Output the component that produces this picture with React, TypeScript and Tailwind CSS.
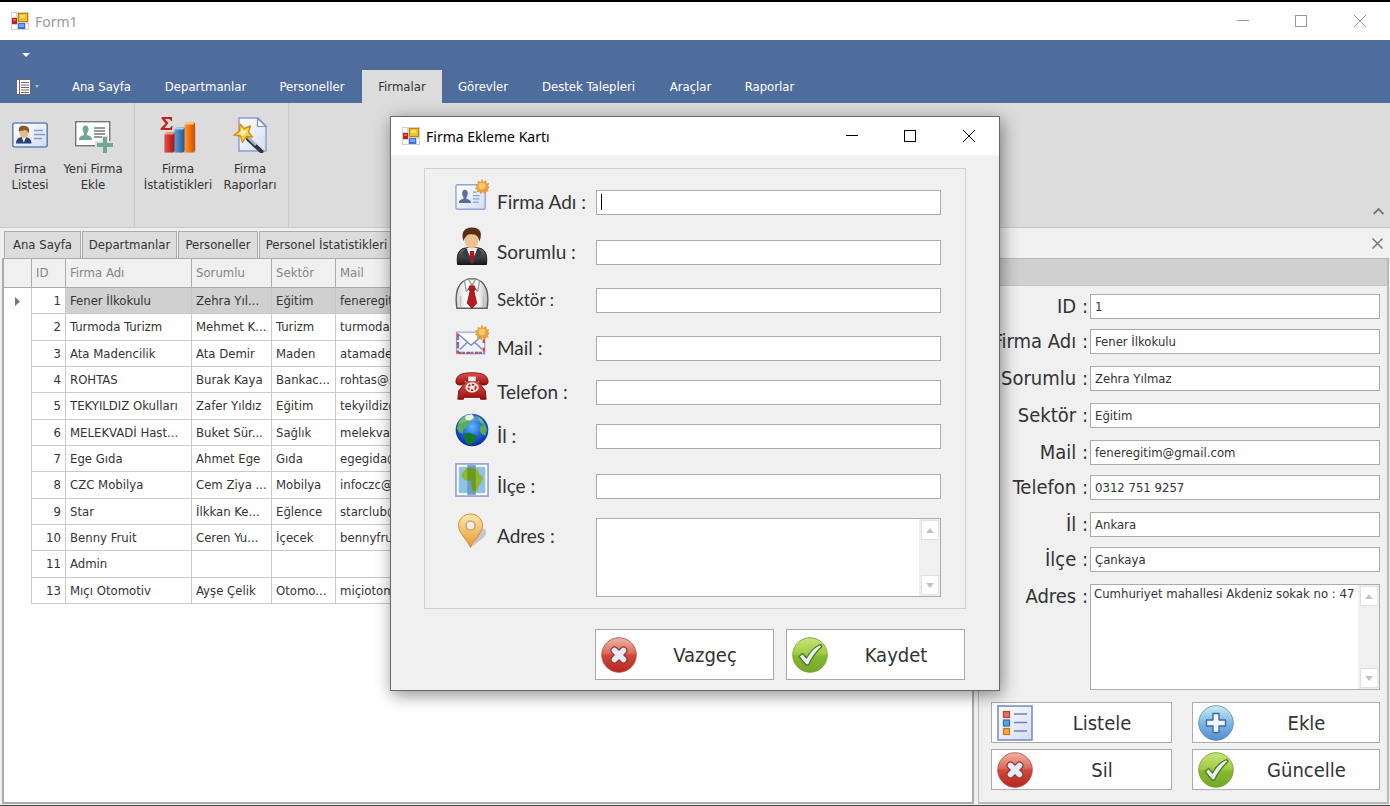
import type { ReactNode } from "react";

function Gradients() {
  return (
    <svg width="0" height="0" className="absolute" aria-hidden="true">
      <defs>
        <linearGradient id="red" x1="0" y1="0" x2="0" y2="1">
          <stop offset="0" stopColor="#f0b5a6" />
          <stop offset="0.45" stopColor="#d8695a" />
          <stop offset="0.5" stopColor="#cd4a3c" />
          <stop offset="1" stopColor="#b8271f" />
        </linearGradient>
        <linearGradient id="green" x1="0" y1="0" x2="0" y2="1">
          <stop offset="0" stopColor="#c9e47a" />
          <stop offset="0.45" stopColor="#a3cc48" />
          <stop offset="0.55" stopColor="#84b82c" />
          <stop offset="1" stopColor="#76a62a" />
        </linearGradient>
        <linearGradient id="blue" x1="0" y1="0" x2="0" y2="1">
          <stop offset="0" stopColor="#c9ecf5" />
          <stop offset="0.5" stopColor="#7fb7e2" />
          <stop offset="1" stopColor="#4f8fcf" />
        </linearGradient>
        <linearGradient id="gold" x1="0" y1="0" x2="0" y2="1">
          <stop offset="0" stopColor="#fce9b0" />
          <stop offset="1" stopColor="#e8962c" />
        </linearGradient>
        <linearGradient id="paper" x1="0" y1="0" x2="1" y2="1">
          <stop offset="0" stopColor="#ffffff" />
          <stop offset="1" stopColor="#d3ddf2" />
        </linearGradient>
        <linearGradient id="suit" x1="0" y1="0" x2="0" y2="1">
          <stop offset="0" stopColor="#6d7580" />
          <stop offset="1" stopColor="#17191d" />
        </linearGradient>
        <linearGradient id="phone" x1="0" y1="0" x2="0" y2="1">
          <stop offset="0" stopColor="#e0504a" />
          <stop offset="1" stopColor="#97100f" />
        </linearGradient>
        <radialGradient id="ocean" cx="0.5" cy="0.4" r="0.6">
          <stop offset="0" stopColor="#5db8f8" />
          <stop offset="0.6" stopColor="#1c5bdd" />
          <stop offset="1" stopColor="#0a2a9a" />
        </radialGradient>
        <linearGradient id="barRed" x1="0" y1="0" x2="1" y2="0">
          <stop offset="0" stopColor="#e2524a" />
          <stop offset="1" stopColor="#a8100f" />
        </linearGradient>
        <linearGradient id="barBlue" x1="0" y1="0" x2="1" y2="0">
          <stop offset="0" stopColor="#5d9fd6" />
          <stop offset="1" stopColor="#1d5592" />
        </linearGradient>
        <linearGradient id="barOrange" x1="0" y1="0" x2="1" y2="0">
          <stop offset="0" stopColor="#ff9a3a" />
          <stop offset="0.4" stopColor="#f9770f" />
          <stop offset="1" stopColor="#cf5006" />
        </linearGradient>
        <linearGradient id="shirt" x1="0" y1="0" x2="1" y2="0">
          <stop offset="0" stopColor="#d4d4d4" />
          <stop offset="0.35" stopColor="#ffffff" />
          <stop offset="0.7" stopColor="#f6f6f6" />
          <stop offset="1" stopColor="#b9b9b9" />
        </linearGradient>
      </defs>
    </svg>
  );
}

function Icon({ size = 36, children }: { size?: number; children: ReactNode }) {
  return (
    <svg width={size} height={size} viewBox="0 0 36 36" className="shrink-0" aria-hidden="true">
      {children}
    </svg>
  );
}

function Burst() {
  return (
    <g transform="translate(7.5 0.5) scale(0.78)">
      <path
        d="M27 0l2 4 3.500-2.500 0 4.500 4-0.500-2 3.500 3 2-3.500 1.500 1.500 3.500-4-0.500-0.500 3.500-3-2.500-2.500 3-1.500-3.500-3.500 1 1-3.500-3.500-1 2.500-2.500-2-3 3.500-0.500-0.500-4 4 1.500z"
        fill="#eda23a"
        stroke="#d98a28"
        strokeWidth="0.800"
      />
      <circle cx="27" cy="9" r="4.500" fill="#f9c870" />
    </g>
  );
}

function AppIcon() {
  return (
    <svg width="18" height="18" viewBox="0 0 18 18" className="shrink-0" aria-hidden="true">
      <rect width="18" height="18" fill="#d2d2d2" />
      <rect x="1" y="1" width="4" height="4" fill="#fff" />
      <rect x="1" y="13" width="5" height="4" fill="#fff" />
      <rect x="15" y="12" width="2" height="5" fill="#fff" />
      <rect x="1" y="6" width="5" height="6" fill="#c01c18" />
      <rect x="2" y="7" width="3" height="2" fill="#dc6258" />
      <rect x="7" y="1" width="10" height="9" fill="#b98306" />
      <rect x="8" y="2" width="8" height="7" fill="#f3c01c" />
      <rect x="9" y="3" width="5" height="3" fill="#fbdc70" />
      <rect x="7" y="11" width="7" height="6" fill="#3a72d8" />
      <rect x="8" y="12" width="5" height="3" fill="#74a7f5" />
    </svg>
  );
}

function CardIcon() {
  return (
    <Icon>
      <rect x="0.800" y="6" width="34.400" height="24" rx="2" fill="url(#paper)" stroke="#6284b8" strokeWidth="1.600" />
      <path d="M4 26.500c0-5 3-6.500 7.500-6.500s8 1.500 8 6.500z" fill="#2a4172" />
      <path d="M9.500 19.500l2.300 6 2.700-6z" fill="#fff" />
      <ellipse cx="12" cy="15.500" rx="4.500" ry="5.500" fill="#e6b98b" />
      <path d="M7 15c-1.500-6 3-7 6-6 4 0 5 4 3.500 7.500-1-3-2-3.500-4-3.500-2.500 1.500-4.500 0-5.500 2z" fill="#8a5a2b" />
      <path d="M22 13.500h9M22 17.500h11M22 21.500h8" stroke="#7d9bc7" strokeWidth="1.400" />
    </Icon>
  );
}

function CardAddIcon() {
  return (
    <svg width="40" height="36" viewBox="0 0 40 36" aria-hidden="true">
      <rect x="2.700" y="4.700" width="34" height="24" fill="#fff" stroke="#777" strokeWidth="1.400" />
      <path d="M6 23c0-3 1.500-4 5-5v-2c-2-2.500-2-7.500 1.500-7.500s4 5 1.500 7.500v2c3.500 1 5 2 5 5z" fill="#6fa893" />
      <path d="M21 11h11M21 14h11M21 17h11M21 20h9" stroke="#777" strokeWidth="1.300" />
      <path d="M22 24h7v-5h6v5h5v8h-5v4h-6v-4h-7z" fill="#dcdcdc" />
      <path d="M32 20v16M24 28h16" stroke="#6fa893" strokeWidth="4" />
    </svg>
  );
}

function StatsIcon() {
  return (
    <Icon>
      <path d="M1.500 0h10.500v4h-1l-1.500-2H5l3.500 4L4.500 11h5.500l1.500-2h1l-0.500 4H0.500v-1.500l5-5-4-5z" fill="#c4201e" />
      <path d="M4 35.500h31.500l1-2V10h-4l-18 8-10 2z" fill="#888" opacity="0.350" />
      <path d="M4.500 17.500l2-2h8.500v18.500l-2 1.500H4.500z" fill="url(#barRed)" />
      <path d="M4.500 17.500l2-2h8.500l-2 2z" fill="#f49a8c" />
      <path d="M14.500 12.500l2-2h8.500v23.500l-2 1.500h-8.500z" fill="url(#barBlue)" />
      <path d="M14.500 12.500l2-2h8.500l-2 2z" fill="#a5cdee" />
      <path d="M24.500 7.500l2-2h8.500v28.500l-2 1.500h-8.500z" fill="url(#barOrange)" />
      <path d="M24.500 7.500l2-2h8.500l-2 2z" fill="#ffc68c" />
    </Icon>
  );
}

function WizardIcon() {
  return (
    <Icon>
      <path d="M7 1h19l8 8v25H7z" fill="url(#paper)" stroke="#8a9cc8" strokeWidth="1.400" />
      <path d="M25.500 1.500v8H34z" fill="#fff" stroke="#7f90bf" strokeWidth="1.200" />
      <path d="M16 22l13.500 12.500" stroke="#2f3644" strokeWidth="4" strokeLinecap="round" />
      <path d="M16 20.500l8 7.500" stroke="#aab4c4" strokeWidth="2.500" />
      <path d="M8 7l4 4.500 6.500-2.500-2 6 4 5-6.500-0.500-3.500 6-2-6.500-6.500-1 5.500-4z" fill="#fbd24a" stroke="#d88d12" strokeWidth="1.400" strokeLinejoin="round" />
      <path d="M9 11l2.500 3 3.500-1-1 3-4 3-3-2.500 2.500-2z" fill="#fff3a8" />
    </Icon>
  );
}

function ContactNewIcon() {
  return (
    <Icon size={34}>
      <rect x="1" y="6" width="31" height="26" rx="1.500" fill="url(#paper)" stroke="#92a5d4" strokeWidth="1.500" />
      <path d="M4 25.500c0-2.500 1.500-3.500 5-4.500v-1.500c-2-2.500-2-8 1.500-8s4 5.500 1.500 8V21c3.500 1 5 2 5 4.500z" fill="#5c6d99" />
      <path d="M19 14h4M19 17.500h7M19 21h7M19 24.500h6" stroke="#8ca0d0" strokeWidth="1.300" />
      <Burst />
    </Icon>
  );
}

function PersonIcon() {
  return (
    <svg width="32" height="38" viewBox="2 0 32 38" className="ml-px" aria-hidden="true">
      <path d="M3.500 37.500c-1-10 1-15.500 8-16.500l6.500-1 6.500 1c7 1 9 6.500 8 16.500z" fill="url(#suit)" stroke="#16181b" />
      <path d="M12 21l6-1 6 1-6 14z" fill="#eee" />
      <path d="M16 24h4l1 10-3 3-3-3z" fill="#b3131b" />
      <path d="M12 21l-4 5 10 11-5-15zM24 21l4 5-10 11 5-15z" fill="#353b43" />
      <ellipse cx="17.500" cy="13" rx="7" ry="8.500" fill="#edc290" />
      <path d="M9.500 14C6 3 13 0.500 18 0.500c8 0 11 5 7.500 14C24 9 22 7.500 19 7.500c-4-1-7 0-9.500 6.500z" fill="#553015" />
    </svg>
  );
}

function ShirtIcon() {
  return (
    <Icon size={34}>
      <path d="M2 33C0 20 2 10 8 5l6-3h8l6 3c6 5 8 15 6 28z" fill="url(#shirt)" stroke="#5e5e5e" strokeWidth="1.500" />
      <path d="M6 33V20M30 33V20" stroke="#b5b5b5" />
      <path d="M10 4l4-2 4 7-6 6zM26 4l-4-2-4 7 6 6z" fill="#fff" stroke="#8a8a8a" strokeWidth="1.200" />
      <path d="M15.500 9.500h5l1 3.500-1.500 2 3 13-5 5-5-5 3-13-1.500-2z" fill="#bb1920" stroke="#8f1318" />
    </Icon>
  );
}

function MailIcon() {
  return (
    <Icon size={34}>
      <rect x="1.500" y="7.500" width="30" height="23" fill="#edf2fc" stroke="#8796c4" strokeWidth="1" />
      <path d="M3 9v21M3 29.500h28M30.500 28V14" fill="none" stroke="#d4474b" strokeWidth="2.500" strokeDasharray="4 5" />
      <path d="M3 13v18M7.500 29.500H31" fill="none" stroke="#4a7fca" strokeWidth="2.500" strokeDasharray="3 6" />
      <path d="M5 10h24L17 21z" fill="#fff" />
      <path d="M4 10l13 11.500L30 10M5 26l8-7.500M29 26l-8-7.500" fill="none" stroke="#7f8db9" strokeWidth="1.600" />
      <Burst />
    </Icon>
  );
}

function PhoneIcon() {
  return (
    <Icon size={34}>
      <path d="M3 32l1-9 8-10h12l8 10 1 9h-6v-2H9v2z" fill="url(#phone)" stroke="#7d0d0d" />
      <path d="M1 14C1 7 6 4 18 4s17 3 17 10c0 2-2 3-5 3s-4-1-4-5H10c0 4-1 5-4 5s-5-1-5-3z" fill="url(#phone)" stroke="#7d0d0d" />
      <path d="M14 8h8v5h-8z" fill="#eee" />
      <ellipse cx="18" cy="19.500" rx="7" ry="5.500" fill="#f2e6e2" />
      <ellipse cx="18" cy="19.500" rx="4" ry="3" fill="none" stroke="#a22" strokeWidth="1.800" strokeDasharray="2.500 1.500" />
    </Icon>
  );
}

function GlobeIcon() {
  return (
    <Icon size={34}>
      <circle cx="18" cy="18" r="17.300" fill="url(#ocean)" />
      <path d="M4 9c4-6 9-8 14-7l3 3-4 5-3 1-2 5-3 1-1 5-4-2-2-4z" fill="#5cab5e" />
      <path d="M11 3l7-2 2 4-4 3-5-1z" fill="#e5f0ee" />
      <path d="M9 22l6-1 8 3-1 5-5 5-4-1-2-5z" fill="#127a22" />
      <path d="M23 3l6 4 3 6-4-1zM27 14l5-2 2 6-2 6-4-2-2-4z" fill="#56ad4f" />
      <path d="M4 12C7 4 13 1.500 18 2c6 0 11 4 13 9-7-4-18-4-27 1z" fill="#fff" opacity="0.180" />
    </Icon>
  );
}

function MapIcon() {
  return (
    <Icon size={34}>
      <rect x="1" y="1" width="34" height="34" fill="#fff" stroke="#7e95c9" strokeWidth="1.500" />
      <rect x="4" y="4" width="28" height="28" fill="#8cc3e5" />
      <path d="M13 2h9v32h-9z" fill="#6596ba" opacity="0.850" />
      <path d="M7 11l6-6 8 1 3 1 2 5 4 3-3 7-2 3-2 5h-4l-2-7v-4l-7-1-3-4z" fill="#8fb833" />
      <path d="M13 5l8 1 1 1v23h-3l-2-7v-4l-4-0.500z" fill="#6f9820" />
    </Icon>
  );
}

function PinIcon() {
  return (
    <Icon>
      <path d="M18 34l12-10c4-4 2-9-3-9z" fill="#777" opacity="0.350" />
      <path d="M16.500 34.500C14 28 4.500 20 4.500 12.500 4.500 6 10 1 16.500 1S28.500 6 28.500 12.500C28.500 20 19 28 16.500 34.500z" fill="url(#gold)" stroke="#d28e32" />
      <circle cx="16.500" cy="12.500" r="4.500" fill="#f0f0f0" stroke="#cfa868" strokeWidth="1.600" />
    </Icon>
  );
}

function CancelIcon() {
  return (
    <Icon>
      <circle cx="18" cy="18" r="17.300" fill="url(#red)" stroke="#b5453a" strokeWidth="0.800" />
      <path d="M13.500 13.500l9 9M22.500 13.500l-9 9" stroke="#93332c" strokeWidth="8" strokeLinecap="round" />
      <path d="M13.500 13.500l9 9M22.500 13.500l-9 9" stroke="#e6ebf7" strokeWidth="5.600" strokeLinecap="round" />
    </Icon>
  );
}

function OkIcon() {
  return (
    <Icon>
      <circle cx="18" cy="18" r="17.300" fill="url(#green)" stroke="#6d9c2c" strokeWidth="0.800" />
      <path d="M7 19.500l3.500-3 4 4.500C18 14.500 22 10 28.500 7.500l1.500 2C24.500 14.500 20 20 16.500 28H14z" fill="#e9eef8" stroke="#4f7a22" strokeWidth="1.300" strokeLinejoin="round" />
    </Icon>
  );
}

function AddIcon() {
  return (
    <Icon>
      <circle cx="18" cy="18" r="17.300" fill="url(#blue)" stroke="#4f84bd" strokeWidth="0.800" />
      <path d="M15 8.500h6V15h6.500v6H21v6.500h-6V21H8.500v-6H15z" fill="#f2f6fc" stroke="#3f6ba5" strokeWidth="1.400" strokeLinejoin="round" />
    </Icon>
  );
}

function ListIcon() {
  return (
    <Icon>
      <rect x="1" y="1" width="34" height="34" fill="url(#paper)" stroke="#7d8fc0" strokeWidth="1.600" />
      <rect x="6.500" y="6.500" width="6" height="6" fill="#e2705e" stroke="#b7452f" strokeWidth="1.200" />
      <rect x="6.500" y="15" width="6" height="6" fill="#5ba3dc" stroke="#2f6fae" strokeWidth="1.200" />
      <rect x="6.500" y="23.500" width="6" height="6" fill="#f0a83c" stroke="#bd7d1f" strokeWidth="1.200" />
      <path d="M17 9h13M17 17.500h13M17 26h13" stroke="#7282b0" strokeWidth="1.500" />
    </Icon>
  );
}

function WindowControls({ tone }: { tone: string }) {
  return (
    <div className={`flex ${tone}`}>
      <button type="button" aria-label="Simge durumuna küçült" className="grid h-9 w-[58px] place-items-center">
        <svg width="12" height="12" viewBox="0 0 12 12" stroke="currentColor"><path d="M0 5.500h12" /></svg>
      </button>
      <button type="button" aria-label="Ekranı kapla" className="grid h-9 w-[58px] place-items-center">
        <svg width="12" height="12" viewBox="0 0 12 12" fill="none" stroke="currentColor"><rect x="0.500" y="0.500" width="11" height="11" /></svg>
      </button>
      <button type="button" aria-label="Kapat" className="grid h-9 w-[60px] place-items-center">
        <svg width="12" height="12" viewBox="0 0 12 12" stroke="currentColor"><path d="M0 0l12 12M12 0L0 12" /></svg>
      </button>
    </div>
  );
}

function ScrollTrack() {
  return (
    <div className="flex w-[21px] shrink-0 flex-col items-center justify-between bg-[#f0f0f0] py-px">
      <button type="button" aria-label="Yukarı kaydır" className="grid h-5 w-[18px] place-items-center border border-[#e2e2e2] bg-white">
        <svg width="8" height="5" viewBox="0 0 8 5" fill="#c4c4c4"><path d="M4 0l4 5H0z" /></svg>
      </button>
      <button type="button" aria-label="Aşağı kaydır" className="grid h-5 w-[18px] place-items-center border border-[#e2e2e2] bg-white">
        <svg width="8" height="5" viewBox="0 0 8 5" fill="#c4c4c4"><path d="M4 5l4-5H0z" /></svg>
      </button>
    </div>
  );
}

const ribbonTabs = [
  { label: "Ana Sayfa", width: "w-[95px]" },
  { label: "Departmanlar", width: "w-[113px]" },
  { label: "Personeller", width: "w-[100px]" },
  { label: "Firmalar", width: "w-[80px]", active: true },
  { label: "Görevler", width: "w-[82px]" },
  { label: "Destek Talepleri", width: "w-[129px]" },
  { label: "Araçlar", width: "w-[75px]" },
  { label: "Raporlar", width: "w-[83px]" },
];

const documentTabs = [
  { label: "Ana Sayfa", width: "w-[77px]" },
  { label: "Departmanlar", width: "w-[95px]" },
  { label: "Personeller", width: "w-[80px]" },
  { label: "Personel İstatistikleri", width: "w-[135px]" },
];

const companies = [
  { id: 1, name: "Fener İlkokulu", contact: "Zehra Yıl...", sector: "Eğitim", mail: "feneregitim@..." },
  { id: 2, name: "Turmoda Turizm", contact: "Mehmet K...", sector: "Turizm", mail: "turmoda@..." },
  { id: 3, name: "Ata Madencilik", contact: "Ata Demir", sector: "Maden", mail: "atamaden@..." },
  { id: 4, name: "ROHTAS", contact: "Burak Kaya", sector: "Bankac...", mail: "rohtas@..." },
  { id: 5, name: "TEKYILDIZ Okulları", contact: "Zafer Yıldız", sector: "Eğitim", mail: "tekyildiz@..." },
  { id: 6, name: "MELEKVADİ Hast...", contact: "Buket Sür...", sector: "Sağlık", mail: "melekvadi@..." },
  { id: 7, name: "Ege Gıda", contact: "Ahmet Ege", sector: "Gıda", mail: "egegida@..." },
  { id: 8, name: "CZC Mobilya", contact: "Cem Ziya ...", sector: "Mobilya", mail: "infoczc@..." },
  { id: 9, name: "Star", contact: "İlkkan Ke...", sector: "Eğlence", mail: "starclub@..." },
  { id: 10, name: "Benny Fruit", contact: "Ceren Yu...", sector: "İçecek", mail: "bennyfruit@..." },
  { id: 11, name: "Admin", contact: "", sector: "", mail: "" },
  { id: 13, name: "Mıçı Otomotiv", contact: "Ayşe Çelik", sector: "Otomo...", mail: "miçiotomotiv@..." },
];

const detailFields = [
  { id: "d-id", label: "ID", value: "1", row: "h-[35px]" },
  { id: "d-firma", label: "Firma Adı", value: "Fener İlkokulu", row: "h-[37px]" },
  { id: "d-sorumlu", label: "Sorumlu", value: "Zehra Yılmaz", row: "h-[37px]" },
  { id: "d-sektor", label: "Sektör", value: "Eğitim", row: "h-[37px]" },
  { id: "d-mail", label: "Mail", value: "feneregitim@gmail.com", row: "h-[35px]" },
  { id: "d-telefon", label: "Telefon", value: "0312 751 9257", row: "h-[37px]" },
  { id: "d-il", label: "İl", value: "Ankara", row: "h-[35px]" },
  { id: "d-ilce", label: "İlçe", value: "Çankaya", row: "h-[37px]" },
];

const dialogFields = [
  { id: "f-firma", label: "Firma Adı :", icon: <ContactNewIcon />, row: "h-[50px]", size: "text-[19px]", caret: true },
  { id: "f-sorumlu", label: "Sorumlu :", icon: <PersonIcon />, row: "h-12", size: "text-[19px]" },
  { id: "f-sektor", label: "Sektör :", icon: <ShirtIcon />, row: "h-12", size: "text-[17px]" },
  { id: "f-mail", label: "Mail :", icon: <MailIcon />, row: "h-11", size: "text-[19px]" },
  { id: "f-telefon", label: "Telefon :", icon: <PhoneIcon />, row: "h-11", size: "text-[19px]" },
  { id: "f-il", label: "İl :", icon: <GlobeIcon />, row: "h-[50px]", size: "text-[19px]" },
  { id: "f-ilce", label: "İlçe :", icon: <MapIcon />, row: "h-11", size: "text-[19px]" },
];

function RibbonButton({ icon, lines, width }: { icon: ReactNode; lines: [string, string]; width: string }) {
  return (
    <button type="button" className={`flex flex-col items-center gap-2 pt-[14px] ${width}`}>
      {icon}
      <span className="flex flex-col whitespace-nowrap leading-4">
        <span>{lines[0]}</span>
        <span>{lines[1]}</span>
      </span>
    </button>
  );
}

function Ribbon() {
  return (
    <header>
      <div className="bg-[#4f6d9c] text-white">
        <div className="flex h-[30px] items-center pl-[22px]">
          <button type="button" aria-label="Hızlı erişim">
            <svg width="8" height="4" viewBox="0 0 8 4" fill="#fff"><path d="M0 0h8L4 4z" /></svg>
          </button>
        </div>
        <nav className="flex h-[33px] items-stretch">
          <button type="button" aria-label="Uygulama menüsü" className="flex w-[54px] items-center gap-1 pl-4">
            <svg width="15" height="16" viewBox="0 0 15 16" aria-hidden="true">
              <rect width="15" height="16" fill="#fff" />
              <rect x="0.500" y="0.500" width="14" height="15" fill="none" stroke="#6a6a6a" />
              <path d="M3.500 1v14" stroke="#6a6a6a" />
              <path d="M5 3.500h8M5 6h8M5 8.500h8M5 11h8M5 13.500h8" stroke="#6a6a6a" />
            </svg>
            <svg width="4" height="3" viewBox="0 0 4 3" fill="#b5bfd0"><path d="M0 0h4L2 3z" /></svg>
          </button>
          {ribbonTabs.map((tab) => (
            <button
              key={tab.label}
              type="button"
              className={`whitespace-nowrap text-center ${tab.width} ${tab.active ? "bg-[#dcdcdc] text-[#333]" : ""}`}
            >
              {tab.label}
            </button>
          ))}
        </nav>
      </div>
      <div className="flex h-[125px] border-b border-[#c6c6c6] bg-[#dcdcdc]">
        <div className="flex w-[135px] border-r border-[#c8c8c8]">
          <RibbonButton icon={<CardIcon />} lines={["Firma", "Listesi"]} width="w-[60px]" />
          <RibbonButton icon={<CardAddIcon />} lines={["Yeni Firma", "Ekle"]} width="w-[66px]" />
        </div>
        <div className="flex w-[154px] border-r border-[#c8c8c8] pl-1">
          <RibbonButton icon={<StatsIcon />} lines={["Firma", "İstatistikleri"]} width="w-[78px]" />
          <RibbonButton icon={<WizardIcon />} lines={["Firma", "Raporları"]} width="w-[66px]" />
        </div>
        <button type="button" aria-label="Şeridi daralt" className="ml-auto self-end px-1.5 pb-3 text-[#777]">
          <svg width="11" height="7" viewBox="0 0 11 7" fill="none" stroke="currentColor" strokeWidth="1.800"><path d="M0.500 6l5-5 5 5" /></svg>
        </button>
      </div>
    </header>
  );
}

function CompanyTable() {
  const cell = "whitespace-nowrap border-b border-r border-[#c9c9c9] px-1";
  return (
    <div className="min-w-0 flex-1 overflow-hidden border-2 border-t border-[#ababab] bg-white">
      <table className="h-[345px] w-full table-fixed border-separate border-spacing-0">
        <colgroup>
          <col className="w-[28px]" />
          <col className="w-[34px]" />
          <col className="w-[126px]" />
          <col className="w-[80px]" />
          <col className="w-[64px]" />
          <col />
        </colgroup>
        <thead>
          <tr className="h-[29px] bg-[#f0f0f0] text-left text-[#858585]">
            {["", "ID", "Firma Adı", "Sorumlu", "Sektör", "Mail"].map((head) => (
              <th key={head} className="whitespace-nowrap border-b border-r border-[#ababab] px-1 font-normal">
                {head}
              </th>
            ))}
          </tr>
        </thead>
        <tbody>
          {companies.map((row, index) => {
            const tint = index === 0 ? "bg-[#d0d0d0]" : "";
            return (
              <tr key={row.id} className="h-[26px]">
                <td className="border-r border-[#c9c9c9] pl-[11px]">
                  {index === 0 && (
                    <svg width="5" height="9" viewBox="0 0 5 9" fill="#777"><path d="M0 0l5 4.500L0 9z" /></svg>
                  )}
                </td>
                <td className={`${cell} text-right`}>{row.id}</td>
                <td className={`${cell} ${tint}`}>{row.name}</td>
                <td className={`${cell} ${tint}`}>{row.contact}</td>
                <td className={`${cell} ${tint}`}>{row.sector}</td>
                <td className={`${cell} ${tint}`}>{row.mail}</td>
              </tr>
            );
          })}
        </tbody>
      </table>
    </div>
  );
}

function PanelButton({ icon, label }: { icon: ReactNode; label: string }) {
  return (
    <button type="button" className="flex h-full w-full items-center border border-[#ababab] bg-white pl-[5px] text-[20px]">
      {icon}
      <span className="flex-1 text-center">{label}</span>
    </button>
  );
}

function DetailPanel() {
  return (
    <section className="w-[411px] shrink-0 border-2 border-t border-l border-[#b9b9b9] bg-[#f0f0f0]">
      <div className="h-[27px] border-b border-[#c4c4c4] bg-[#d0d0d0]" />
      <div className="flex flex-col pl-3 pr-[7px] pt-2">
        {detailFields.map((field) => (
          <div key={field.id} className={`flex items-start ${field.row}`}>
            <label htmlFor={field.id} className="w-[99px] shrink-0 whitespace-pre pr-0.5 text-right text-[20px] leading-[25px]">
              {field.label} :
            </label>
            <input
              id={field.id}
              defaultValue={field.value}
              className="h-[25px] min-w-0 flex-1 border border-[#ababab] bg-white px-1 outline-none"
            />
          </div>
        ))}
        <div className="flex items-start">
          <label htmlFor="d-adres" className="w-[99px] shrink-0 pr-0.5 text-right text-[20px] leading-[25px]">
            Adres :
          </label>
          <div className="flex h-[106px] min-w-0 flex-1 border border-[#ababab] bg-white">
            <textarea
              id="d-adres"
              defaultValue="Cumhuriyet mahallesi Akdeniz sokak no : 47"
              className="min-w-0 flex-1 resize-none overflow-hidden whitespace-nowrap pl-[3px] leading-[18px] outline-none"
            />
            <ScrollTrack />
          </div>
        </div>
        <div className="mt-3 grid auto-rows-[41px] grid-cols-[181px_1fr] gap-x-5 gap-y-1.5">
          <PanelButton icon={<ListIcon />} label="Listele" />
          <PanelButton icon={<AddIcon />} label="Ekle" />
          <PanelButton icon={<CancelIcon />} label="Sil" />
          <PanelButton icon={<OkIcon />} label="Güncelle" />
        </div>
      </div>
    </section>
  );
}

function CompanyDialog() {
  return (
    <div className="absolute inset-x-0 top-[114px] flex justify-center">
      <div
        role="dialog"
        aria-labelledby="dialog-title"
        className="w-[610px] border border-[#666] bg-[#f0f0f0] shadow-[2px_4px_16px_rgba(0,0,0,0.45)]"
      >
        <div className="flex h-[38px] items-center bg-white pl-[11px]">
          <AppIcon />
          <h2 id="dialog-title" className="flex-1 pl-1.5 font-['Noto_Sans',sans-serif] text-[14px] text-black">
            Firma Ekleme Kartı
          </h2>
          <WindowControls tone="text-black" />
        </div>
        <form className="px-[33px] pb-[10px] pt-[13px]">
          <div className="border border-[#d0d0d0] pb-[11px] pl-[29px] pr-6 pt-[21px]">
            {dialogFields.map((field) => (
              <div key={field.id} className={`flex items-start ${field.row}`}>
                <div className="-mt-[9px] flex h-[30px] w-[43px] shrink-0 items-center pl-px">{field.icon}</div>
                <label
                  htmlFor={field.id}
                  className={`w-[99px] shrink-0 font-['Lato',sans-serif] leading-6 ${field.size}`}
                >
                  {field.label}
                </label>
                <div className="relative min-w-0 flex-1">
                  <input id={field.id} className="block h-[25px] w-full border border-[#ababab] bg-white px-1 outline-none" />
                  {field.caret && <span className="absolute left-[5px] top-[4px] h-4 w-px bg-black" />}
                </div>
              </div>
            ))}
            <div className="flex items-start">
              <div className="flex h-[26px] w-[43px] shrink-0 items-center">
                <PinIcon />
              </div>
              <label htmlFor="f-adres" className="w-[99px] shrink-0 pt-1.5 font-['Lato',sans-serif] text-[19px] leading-6">
                Adres :
              </label>
              <div className="flex h-[79px] min-w-0 flex-1 border border-[#ababab] bg-white">
                <textarea id="f-adres" className="min-w-0 flex-1 resize-none overflow-hidden px-1 outline-none" />
                <ScrollTrack />
              </div>
            </div>
          </div>
          <div className="mt-5 flex justify-end gap-3 pr-px">
            <button type="button" className="flex h-[51px] w-[179px] items-center border border-[#a8a8a8] bg-white pl-[5px] text-[20px]">
              <CancelIcon />
              <span className="flex-1 text-center">Vazgeç</span>
            </button>
            <button type="button" className="flex h-[51px] w-[179px] items-center border border-[#a8a8a8] bg-white pl-[5px] text-[20px]">
              <OkIcon />
              <span className="flex-1 text-center">Kaydet</span>
            </button>
          </div>
        </form>
      </div>
    </div>
  );
}

export default function App() {
  return (
    <div className="relative flex min-h-screen flex-col overflow-hidden border-b border-t-2 border-b-[#444] border-t-black bg-[#f0f0f0] font-['DejaVu_Sans_Condensed','Noto_Sans',sans-serif] text-[13px] text-[#333]">
      <Gradients />
      <div className="flex h-[38px] items-center bg-white pl-[11px]">
        <AppIcon />
        <h1 className="flex-1 pl-1.5 font-['Noto_Sans',sans-serif] text-[14px] text-[#999]">Form1</h1>
        <WindowControls tone="text-[#999]" />
      </div>
      <Ribbon />
      <div className="flex h-[30px] items-end pl-1">
        {documentTabs.map((tab) => (
          <button
            key={tab.label}
            type="button"
            className={`mr-px h-[27px] shrink-0 whitespace-nowrap border border-b-0 border-[#ababab] bg-[#dcdcdc] text-center ${tab.width}`}
          >
            {tab.label}
          </button>
        ))}
        <button type="button" aria-label="Sekmeyi kapat" className="ml-auto self-center pr-[7px] text-[#777]">
          <svg width="11" height="11" viewBox="0 0 11 11" stroke="currentColor" strokeWidth="1.500"><path d="M0.500 0.500l10 10M10.500 0.500l-10 10" /></svg>
        </button>
      </div>
      <main className="flex flex-1 gap-1 pb-px pl-0.5 pr-px">
        <CompanyTable />
        <DetailPanel />
      </main>
      <CompanyDialog />
    </div>
  );
}
